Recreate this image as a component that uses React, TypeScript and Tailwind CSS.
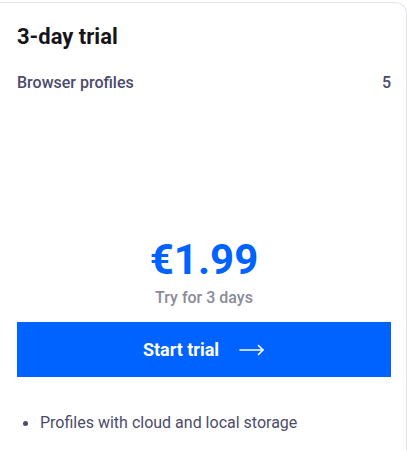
export default function App() {
  return (
    <div className="min-h-[450px] bg-white pt-[2px] font-['Roboto',sans-serif]">
      <div className="h-[460px] rounded-tr-xl border-t border-r border-[#e3e3e8] bg-white pl-[17px] pr-[15px] pt-[19px]">
        <h2 className="text-[22px] font-bold leading-[30px] text-[#16161a]">3-day trial</h2>

        <div className="mt-[19px] flex items-center justify-between text-[16px] font-medium leading-6 text-[#4b4b6b]">
          <span>Browser profiles</span>
          <span>5</span>
        </div>

        <div className="mt-[141px] flex flex-col items-center">
          <div className="text-[42px] font-bold leading-[48px] text-[#0062ff]">€1.99</div>
          <div className="mt-[3px] text-[16px] font-medium leading-[22px] text-[#8a8a99]">Try for 3 days</div>
        </div>

        <button className="mt-[13px] flex h-[55px] w-full items-center justify-center gap-[20px] bg-[#0062ff] text-[18px] font-bold text-white">
          <span>Start trial</span>
          <svg width="26" height="12" viewBox="0 0 26 12" fill="none" stroke="currentColor" strokeWidth="1.6" strokeLinecap="round" strokeLinejoin="round">
            <path d="M1 6h23" />
            <path d="M19.5 1.5 24 6l-4.5 4.5" />
          </svg>
        </button>

        <ul className="mt-[34px] pl-[6px]">
          <li className="flex items-center gap-[12px] text-[16px] leading-6 text-[#4b4b6b]">
            <span className="h-[5px] w-[5px] rounded-full bg-[#4b4b6b]" />
            <span>Profiles with cloud and local storage</span>
          </li>
        </ul>
      </div>
    </div>
  );
}
